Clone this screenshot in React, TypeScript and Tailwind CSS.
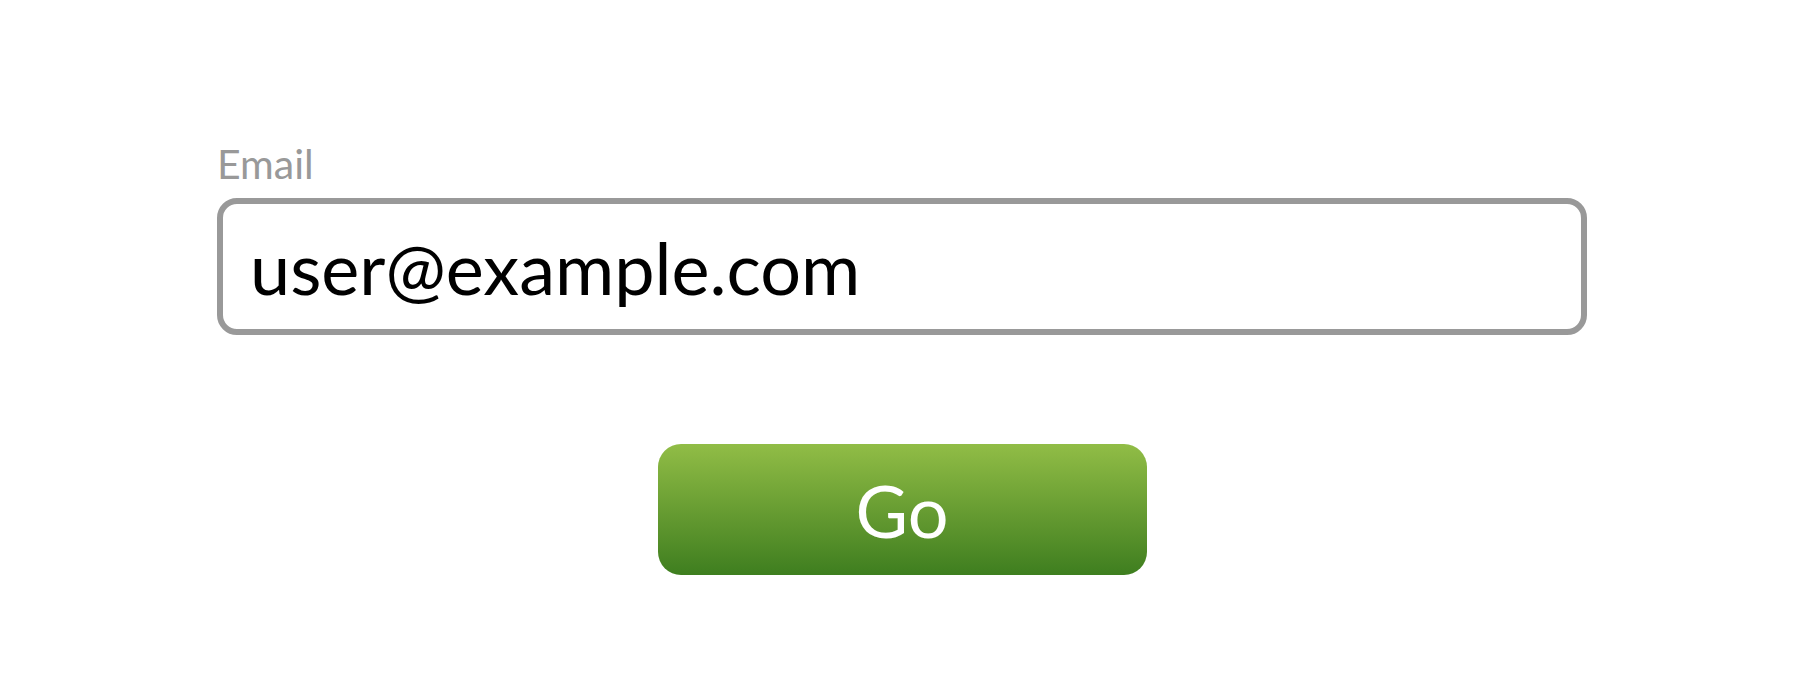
function App() {
  return (
    <div className="min-h-[693px] w-full bg-white pt-[140px] font-['Lato','Liberation_Sans',sans-serif]">
      <form className="ml-[217px] w-[1370px] flex flex-col" onSubmit={(e) => e.preventDefault()}>
        {/* campo de email */}
        <label htmlFor="email" className="text-[41px] leading-[48px] text-[#999999] mb-[10px]">
          Email
        </label>
        <input
          id="email"
          type="email"
          defaultValue="user@example.com"
          className="h-[137px] w-full rounded-[20px] border-[6px] border-[#999999] bg-white pl-[27px] text-[72px] leading-[86px] text-black outline-none"
        />

        {/* botão */}
        <div className="flex justify-center mt-[109px]">
          <button
            type="submit"
            className="h-[131px] w-[489px] rounded-[23px] bg-linear-to-b from-[#91bd46] to-[#3e7e1f] text-[72px] leading-[86px] text-white"
          >
            Go
          </button>
        </div>
      </form>
    </div>
  );
}

export default App;
